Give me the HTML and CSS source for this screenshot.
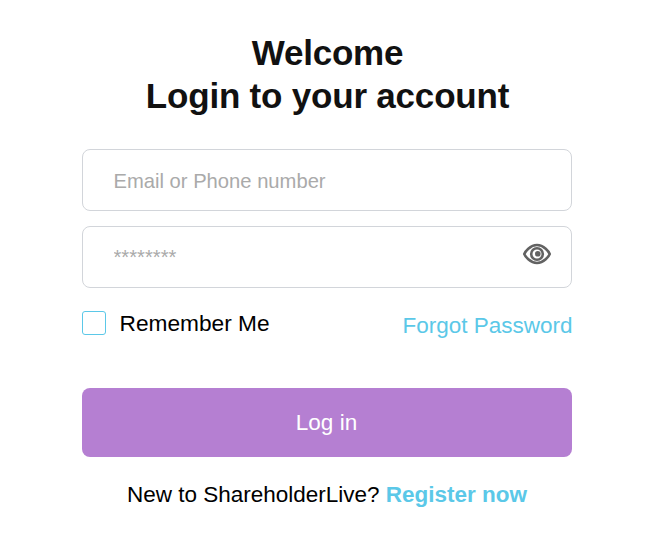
FILE: index.html
```html
<!DOCTYPE html>
<html lang="en">
<head>
  <meta charset="UTF-8">
  <meta name="viewport" content="width=device-width, initial-scale=1.0">
  <title>Login</title>
  <link rel="stylesheet" href="styles.css">
</head>
<body>
  <div class="login-box">
    <h1>Welcome<br>Login to your account</h1>

    <div class="field">
      <input class="email" type="text" placeholder="Email or Phone number">
    </div>

    <div class="field">
      <input type="password" placeholder="********">
      <svg class="eye" width="30" height="30" viewBox="0 0 30 30" fill="none" stroke="#626262" stroke-width="2.6">
        <path d="M2.300 15C3 13 8 6 15 6S27 13 27.700 15C27 17 22 24 15 24S3 17 2.300 15Z"/>
        <circle cx="15" cy="15" r="5.800"/>
        <circle cx="15.800" cy="14.800" r="2.800" fill="#626262" stroke="none"/>
      </svg>
    </div>

    <div class="options">
      <label class="remember">
        <span class="check"></span>
        Remember Me
      </label>
      <a class="forgot" href="#">Forgot Password</a>
    </div>

    <button class="login-btn">Log in</button>

    <p class="register">New to ShareholderLive? <a href="#">Register now</a></p>
  </div>
</body>
</html>
```

FILE: styles.css
```css
body {
  margin: 0;
  background-color: #fff;
  font-family: "Liberation Sans", Arial, sans-serif;
  color: #000;
}
.login-box {
  width: 490px;
  margin: 0 auto;
  padding-top: 31px;
}
h1 {
  margin: 0 0 32px;
  padding-left: 2px;
  text-align: center;
  font-size: 35px;
  line-height: 43px;
  letter-spacing: -0.2px;
  font-weight: bold;
  color: #111;
}
.field {
  position: relative;
  margin-bottom: 15px;
}
.field input {
  display: block;
  width: 100%;
  height: 62px;
  box-sizing: border-box;
  padding: 0 31px;
  border: 1px solid #d2d5da;
  border-radius: 8px;
  font-family: inherit;
  font-size: 20.2px;
  outline: none;
}
.field .email {
  padding-top: 2px;
}
.field input::placeholder {
  color: #aaa;
  opacity: 1;
}
.eye {
  position: absolute;
  top: 13px;
  right: 20px;
}
.options {
  display: flex;
  justify-content: space-between;
  align-items: flex-start;
  margin-top: 22px;
}
.remember {
  display: flex;
  align-items: center;
  gap: 14px;
  font-size: 22.7px;
}
.check {
  width: 22px;
  height: 22px;
  margin-top: -2px;
  border: 1px solid #5bc8e8;
  border-radius: 3px;
}
.forgot {
  margin-top: 3px;
  margin-right: -1px;
  color: #5bc8e8;
  font-size: 22.5px;
  text-decoration: none;
}
.login-btn {
  display: block;
  width: 100%;
  height: 69px;
  margin-top: 49px;
  background-color: #b57fd2;
  color: #fff;
  border: none;
  border-radius: 8px;
  font-family: inherit;
  font-size: 22.5px;
}
.register {
  margin: 25px 0 0;
  padding-left: 1px;
  text-align: center;
  font-size: 22.5px;
}
.register a {
  color: #5bc8e8;
  font-weight: bold;
  text-decoration: none;
}
```
